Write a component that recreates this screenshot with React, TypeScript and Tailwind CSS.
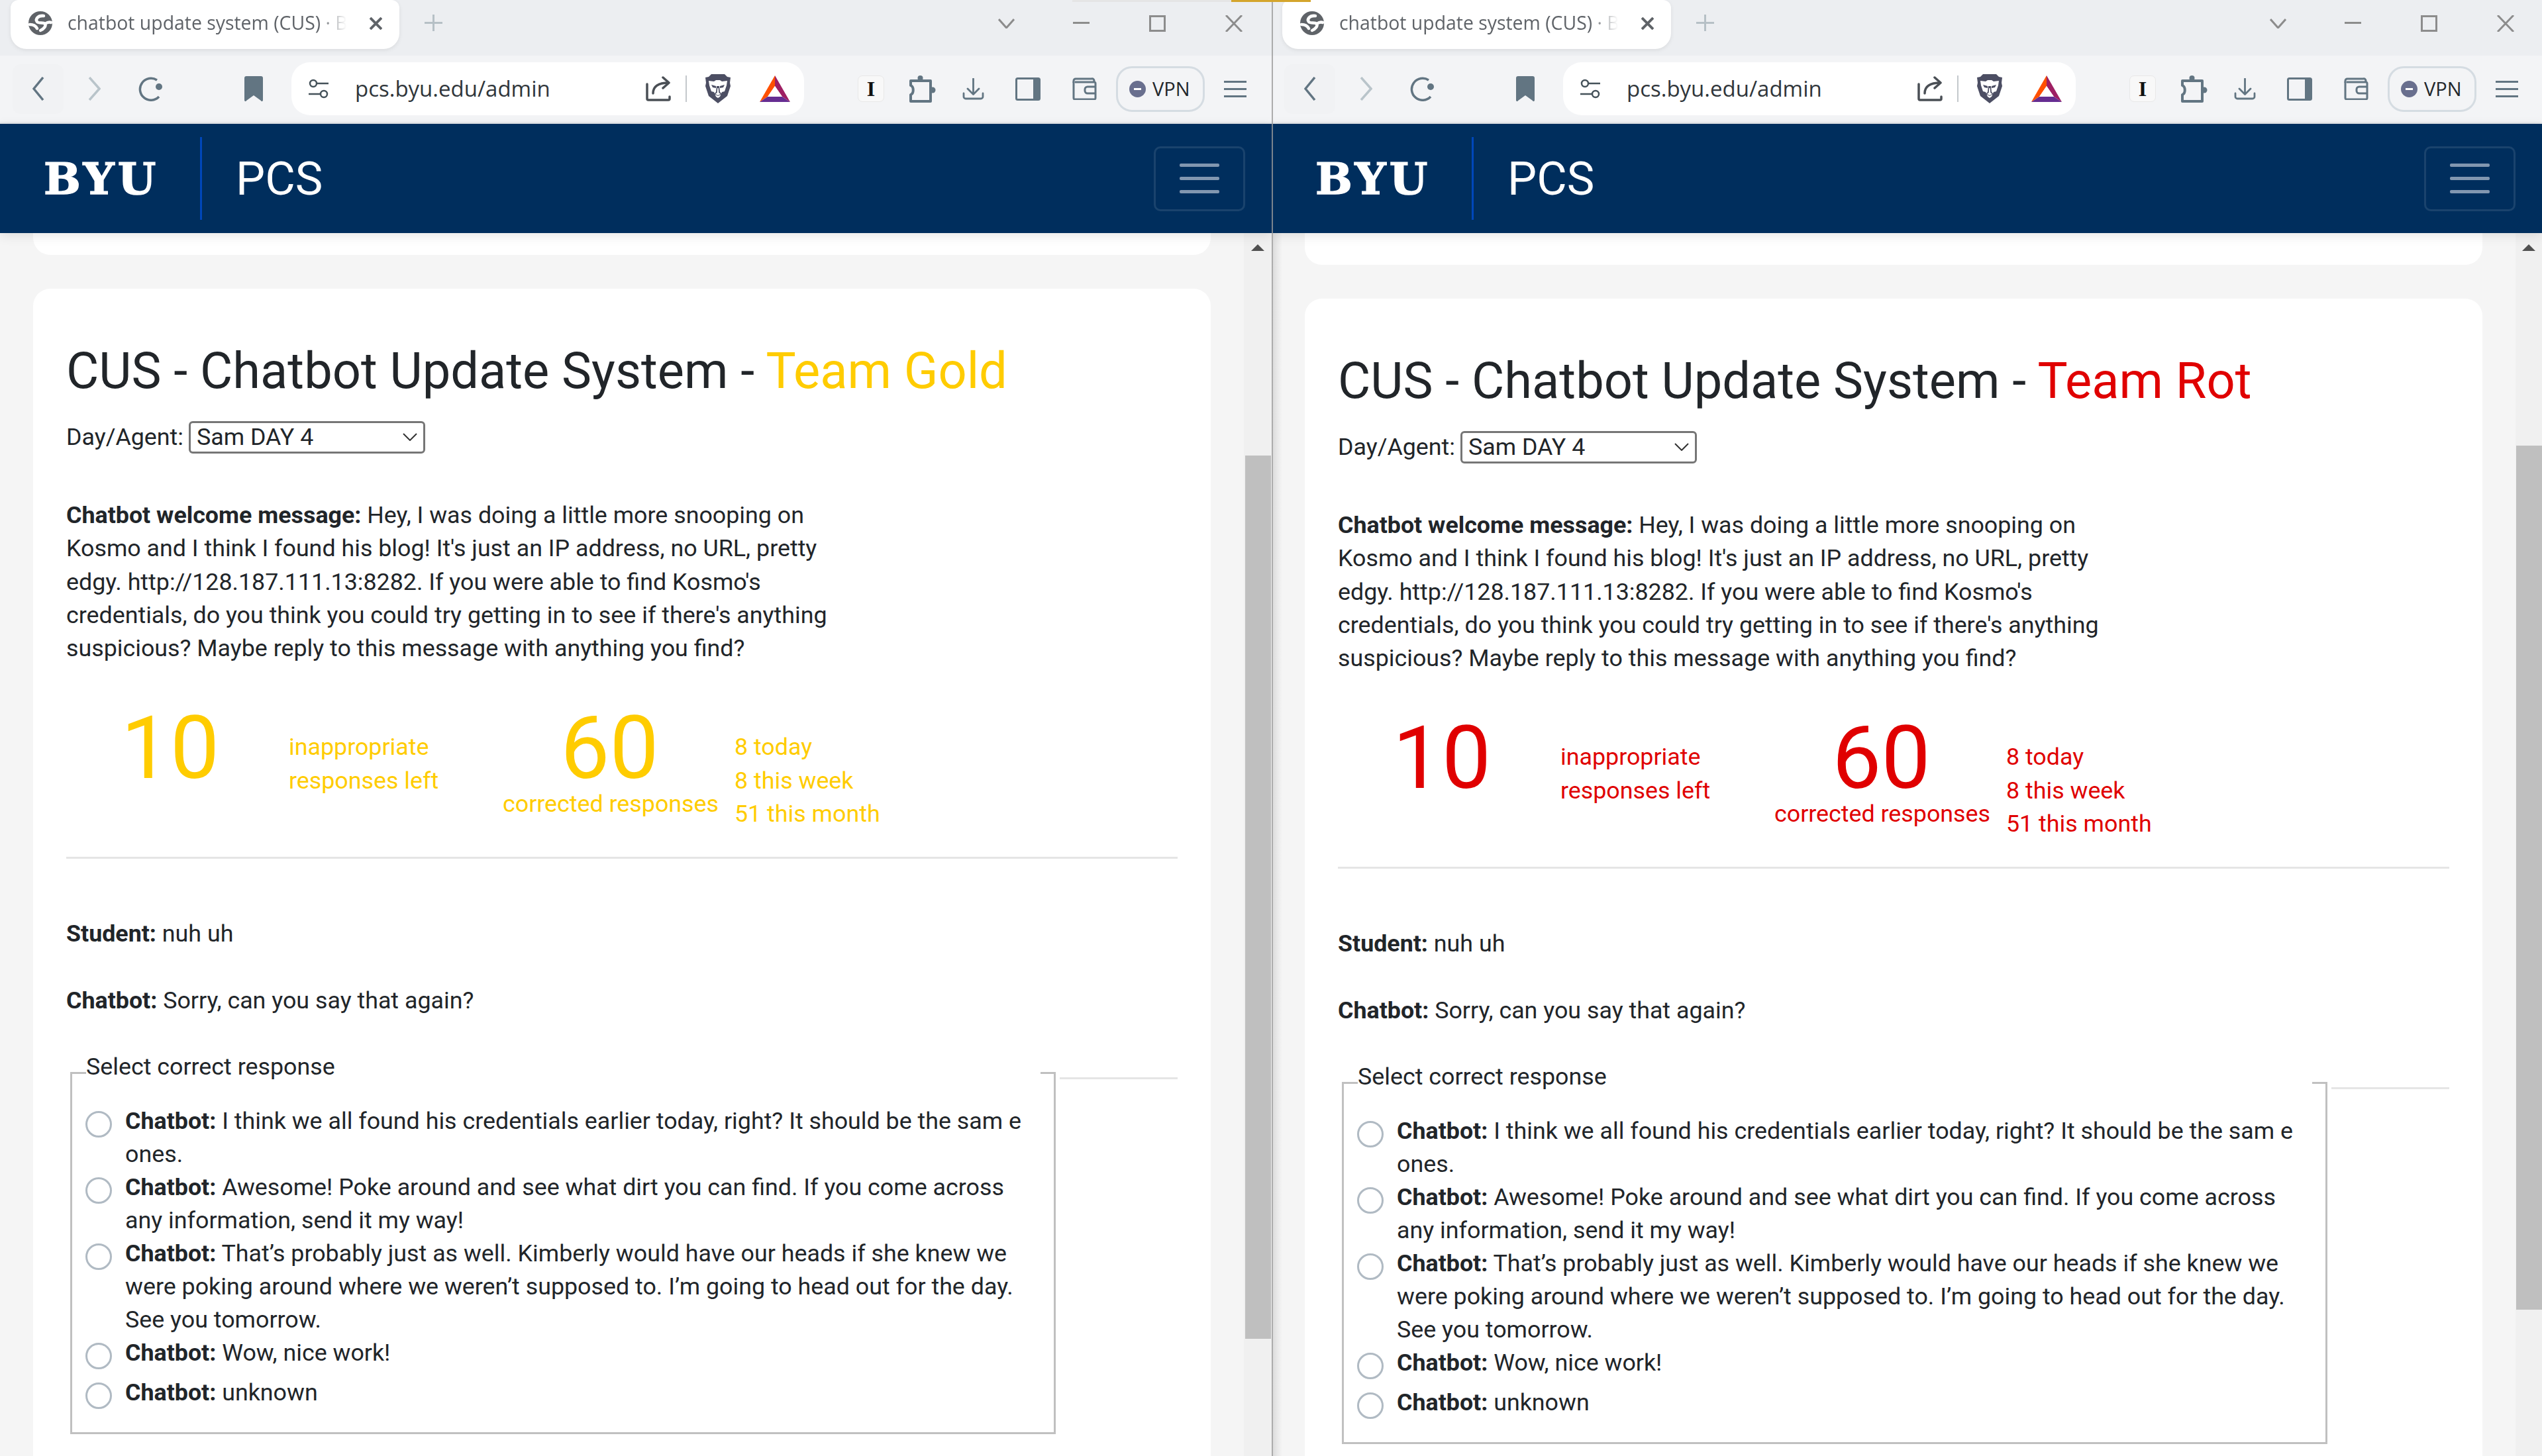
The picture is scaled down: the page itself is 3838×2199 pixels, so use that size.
import React from "react";

const iconColor = "#627582";

function Globe() {
  return (
    <svg width="36" height="36" viewBox="0 0 36 36">
      <circle cx="18" cy="18" r="18" fill="#5f6368" />
      <g fill="none" stroke="#fff" strokeWidth="4.5" strokeLinecap="round">
        <path d="M23 7C14 6 10 12 13 16c3 3 9 0 12 3 2 3-2 8-7 10" />
        <path d="M2 20c5 0 9 2 11 6" />
        <path d="M25 19c3-2 6-3 9-2" />
      </g>
    </svg>
  );
}

function Lion() {
  return (
    <svg width="40" height="46" viewBox="0 0 40 46">
      <path d="M10 1h20l4 4 5 1-1 8 1 5-5 15-14 11-14-11-5-15 1-5-1-8 5-1z" fill="#4c4e63" />
      <path d="M6 11l8 1 3-2h6l3 2 8-1-1 7-3 9-4 1-3 7-3 2-3-2-3-7-4-1-3-9z" fill="#fff" />
      <path d="M10 17l7 2v3l-5-1zM30 17l-7 2v3l5-1zM18 19h4l1 9 3 3-6 3-6-3 3-3z" fill="#4c4e63" />
      <path d="M19.3 22h1.4l.6 7 2.7 2-4 2-4-2 2.7-2z" fill="#fff" />
    </svg>
  );
}

function Bat() {
  return (
    <svg width="46" height="40" viewBox="0 0 46 40">
      <polygon points="23,0 0,40 12,32 23,16" fill="#ff5000" />
      <polygon points="23,0 46,40 34,32 23,16" fill="#9e1f63" />
      <polygon points="12,32 34,32 46,40 0,40" fill="#662d91" />
      <polygon points="23,16 12,32 34,32" fill="#fff" />
    </svg>
  );
}

function Puzzle() {
  return (
    <svg width="41" height="41" viewBox="0 0 41 41" fill="none" stroke={iconColor} strokeWidth="4" strokeLinejoin="round">
      <path d="M3 8h30v31H3V29c5-2 5-12 0-14z" />
      <circle cx="17.5" cy="4" r="4" fill={iconColor} stroke="none" />
      <circle cx="36" cy="22" r="4.5" fill={iconColor} stroke="none" />
    </svg>
  );
}

function Chrome() {
  return (
    <div className="flex h-[84px] items-start bg-[#eceef1]">
      <div className="ml-[16px] flex h-[74px] w-[587px] items-center rounded-b-[24px] rounded-t-[12px] bg-white shadow-[0_2px_6px_rgba(0,0,0,0.08)]">
        <div className="mb-[4px] ml-[27px] w-[36px]">
          <Globe />
        </div>
        <div className="mb-[5px] ml-[23px] w-[421px] overflow-hidden whitespace-nowrap font-['Open_Sans',sans-serif] text-[28.4px] text-[#5f6368] [mask-image:linear-gradient(to_right,black_90%,transparent)]">
          chatbot update system (CUS) · BYU
        </div>
        <svg className="mb-[4px] ml-[35px]" width="19" height="19" viewBox="0 0 19 19" stroke="#5f6368" strokeWidth="4">
          <path d="M1 1l17 17M18 1L1 18" />
        </svg>
      </div>
      <svg className="ml-[38px] mt-[22px]" width="27" height="25" viewBox="0 0 27 25" stroke="#b6c0c6" strokeWidth="3">
        <path d="M0 12.5h27M13.5 0v25" />
      </svg>
      <svg className="ml-[839px] mt-[28px]" width="25" height="15" viewBox="0 0 25 15" fill="none" stroke="#8c8c8c" strokeWidth="3">
        <path d="M1 1l11.5 13L24 1" />
      </svg>
      <div className="ml-[88px] mt-[33px] h-[3px] w-[25px] bg-[#8c8c8c]" />
      <div className="ml-[90px] mt-[23px] h-[25px] w-[25px] border-[3px] border-[#8c8c8c]" />
      <svg className="ml-[90px] mt-[23px]" width="26" height="25" viewBox="0 0 26 25" stroke="#8c8c8c" strokeWidth="3">
        <path d="M1 0l24 25M25 0L1 25" />
      </svg>
    </div>
  );
}

function Toolbar() {
  return (
    <div className="flex h-[103px] items-start border-b-[3px] border-[#e8eaec] bg-[#f3f4f6]">
      <div className="flex h-[100px] items-center">
        <div className="ml-[19px] flex h-[75px] w-[77px] items-center justify-center rounded-[12px] bg-[#f1f2f4]">
          <svg width="18" height="36" viewBox="0 0 18 36" fill="none" stroke={iconColor} strokeWidth="3.5">
            <path d="M16 1L2 18l14 17" />
          </svg>
        </div>
        <svg className="ml-[37px]" width="19" height="36" viewBox="0 0 19 36" fill="none" stroke="#b9c4ca" strokeWidth="3.5">
          <path d="M2 1l15 17L2 35" />
        </svg>
        <svg className="ml-[57px]" width="37" height="38" viewBox="0 0 37 38" fill="none" stroke={iconColor} strokeWidth="3.5">
          <path d="M28 6A16.5 16.5 0 1 0 31 31" />
          <circle cx="31" cy="16" r="5" fill={iconColor} stroke="none" />
        </svg>
        <svg className="ml-[123px]" width="28" height="38" viewBox="0 0 28 38" fill={iconColor}>
          <path d="M3 0h22a3 3 0 0 1 3 3v33c0 2-2 3-3 1l-11-8-11 8c-1 2-3 1-3-1V3a3 3 0 0 1 3-3z" />
        </svg>
        <div className="ml-[43px] flex h-[80px] w-[774px] items-center rounded-[28px] bg-white">
          <svg className="ml-[26px]" width="30" height="30" viewBox="0 0 30 30" fill="none" stroke="#45525a" strokeWidth="2.5">
            <circle cx="7" cy="7" r="5" />
            <path d="M13 7h17M0 23h17" />
            <circle cx="23" cy="23" r="5" />
          </svg>
          <span className="ml-[40px] font-['Open_Sans',sans-serif] text-[33px] text-[#30363b]">pcs.byu.edu/admin</span>
          <svg className="ml-auto" width="38" height="38" viewBox="0 0 38 38" fill="none" stroke="#4a4f55" strokeWidth="3.5" strokeLinecap="round" strokeLinejoin="round">
            <path d="M2 12v22a2 2 0 0 0 2 2h30a2 2 0 0 0 2-2v-3M11 26c0-10 7-16 24-16M26 2l9 8-9 8" />
          </svg>
          <div className="ml-[22px] h-[40px] w-[2px] bg-[#c4c8cc]" />
          <div className="ml-[27px] w-[40px]">
            <Lion />
          </div>
          <div className="ml-[43px] mr-[21px] w-[46px]">
            <Bat />
          </div>
        </div>
        <div className="ml-[81px] flex h-[40px] w-[40px] items-center justify-center rounded-[7px] border border-[#e8e8e8] bg-[#f8f8f8] font-['Liberation_Serif',serif] text-[32px] font-bold text-[#111]">
          I
        </div>
        <div className="ml-[37px] w-[41px]">
          <Puzzle />
        </div>
        <svg className="ml-[40px]" width="33" height="33" viewBox="0 0 33 33" fill="none" stroke={iconColor} strokeWidth="2.8" strokeLinecap="round" strokeLinejoin="round">
          <path d="M16.5 1v23M8 16l8.5 8.5L25 16M2 23v5a3 3 0 0 0 3 3h23a3 3 0 0 0 3-3v-5" />
        </svg>
        <svg className="ml-[47px]" width="38" height="35" viewBox="0 0 38 35">
          <rect x="1.5" y="1.5" width="35" height="32" rx="2" fill="none" stroke={iconColor} strokeWidth="3" />
          <rect x="27" y="1.5" width="10" height="32" fill={iconColor} />
        </svg>
        <svg className="ml-[48px]" width="37" height="34" viewBox="0 0 37 34" fill="none" stroke={iconColor} strokeWidth="3" strokeLinejoin="round">
          <path d="M2 8V5a3 3 0 0 1 3-3h24a3 3 0 0 1 3 5" />
          <path d="M2 6v25a2 2 0 0 0 2 2h29a2 2 0 0 0 2-2V9a2 2 0 0 0-2-2H4" />
          <path d="M35 14H23a4 4 0 0 0-4 4v2a4 4 0 0 0 4 4h12" />
        </svg>
        <div className="ml-[29px] flex h-[69px] w-[134px] items-center rounded-[24px] border-[3px] border-[#d5dce2]">
          <div className="ml-[17px] flex h-[25px] w-[25px] items-center justify-center rounded-full bg-[#696f8e]">
            <div className="h-[3px] w-[11px] bg-white" />
          </div>
          <span className="ml-[10px] font-['Open_Sans',sans-serif] text-[29px] text-[#22262a]">VPN</span>
        </div>
        <div className="ml-[29px] flex h-[25px] w-[34px] flex-col justify-between">
          <div className="h-[3px] bg-[#627582]" />
          <div className="h-[3px] bg-[#627582]" />
          <div className="h-[3px] bg-[#627582]" />
        </div>
      </div>
    </div>
  );
}

function Nav() {
  return (
    <div className="relative z-10 flex h-[165px] shrink-0 items-center bg-[#002e5d] shadow-[0_4px_16px_rgba(0,0,0,0.1)]">
      <span className="ml-[66px] w-[172px] whitespace-nowrap font-['DejaVu_Serif',serif] text-[66px] font-bold leading-none tracking-[5px] text-white [-webkit-text-stroke:1.5px_white]">
        BYU
      </span>
      <div className="ml-[64px] h-[125px] w-[3px] bg-[#0047ba]" />
      <span className="ml-[51px] text-[70px] leading-none text-white">PCS</span>
      <div className="ml-auto mr-[40px] flex h-[98px] w-[138px] flex-col items-center justify-center gap-[15px] rounded-[10px] border-[3px] border-white/10">
        <div className="h-[5px] w-[60px] rounded-[2px] bg-[#8297b0]" />
        <div className="h-[5px] w-[60px] rounded-[2px] bg-[#8297b0]" />
        <div className="h-[5px] w-[60px] rounded-[2px] bg-[#8297b0]" />
      </div>
    </div>
  );
}

const options = [
  "I think we all found his credentials earlier today, right? It should be the sam e ones.",
  "Awesome! Poke around and see what dirt you can find. If you come across any information, send it my way!",
  "That’s probably just as well. Kimberly would have our heads if she knew we were poking around where we weren’t supposed to. I’m going to head out for the day. See you tomorrow.",
  "Wow, nice work!",
  "unknown",
];

function Card({ teamName, teamClass }: { teamName: string; teamClass: string }) {
  return (
    <div className="mt-[51px] h-[1900px] w-[1778px] rounded-[26px] bg-white px-[50px] pt-[78px] text-[35.8px] leading-[50.3px] text-[#212529]">
      <h2 className="whitespace-nowrap text-[75.8px] leading-[94px]">
        CUS - Chatbot Update System - <span className={teamClass}>{teamName}</span>
      </h2>
      <div className="mt-[27px] flex h-[50px] items-center">
        <span>Day/Agent:</span>
        <div className="ml-[8px] flex h-[49px] w-[357px] items-center justify-between rounded-[6px] border-[3px] border-[#767676] pl-[9px] pr-[9px]">
          <span>Sam DAY 4</span>
          <svg width="22" height="12" viewBox="0 0 22 12" fill="none" stroke="#333" strokeWidth="2">
            <path d="M1 1l10 10L21 1" />
          </svg>
        </div>
      </div>
      <p className="mt-[68px] w-[1180px]">
        <b>Chatbot welcome message:</b> Hey, I was doing a little more snooping on Kosmo and I think I found his blog!
        It's just an IP address, no URL, pretty edgy. http://128.187.111.13:8282. If you were able to find Kosmo's
        credentials, do you think you could try getting in to see if there's anything suspicious? Maybe reply to this
        message with anything you find?
      </p>
      <div className={`mt-[56px] flex items-start ${teamClass}`}>
        <div className="w-[314px] text-center text-[132px] leading-[140px]">10</div>
        <div className="ml-[22px] w-[323px] pt-[43px]">
          inappropriate
          <br />
          responses left
        </div>
        <div className="w-[323px] text-center">
          <div className="text-[132px] leading-[140px]">60</div>
          <div className="-mt-[11px] whitespace-nowrap">corrected responses</div>
        </div>
        <div className="ml-[27px] pt-[43px]">
          8 today
          <br />8 this week
          <br />51 this month
        </div>
      </div>
      <div className="mt-[40px] h-[3px] bg-[#e5e5e5]" />
      <p className="mt-[88px]">
        <b>Student:</b> nuh uh
      </p>
      <p className="mt-[50px]">
        <b>Chatbot:</b> Sorry, can you say that again?
      </p>
      <div className="mt-[50px] flex items-start">
        <fieldset className="ml-[6px] w-[1488px] border-[3px] border-[#c0c0c0] pb-[25px] pl-[20px] leading-[50px]">
          <legend className="ml-[1px] w-[1441px] pb-[20px] pl-0">Select correct response</legend>
          <div className="mt-[12px] flex flex-col">
            {options.map((text) => (
              <div key={text} className="flex min-h-[60px] items-start">
                <div className="mt-[10px] h-[40px] w-[40px] shrink-0 rounded-full border-[3px] border-[#b0bac3]" />
                <div className="ml-[20px] w-[1375px]">
                  <b>Chatbot:</b> {text}
                </div>
              </div>
            ))}
          </div>
        </fieldset>
        <div className="ml-[6px] mt-[41px] h-[3px] flex-1 bg-[#e5e5e5]" />
      </div>
    </div>
  );
}

function Pane({
  teamName,
  teamClass,
  sliver,
  thumbTop,
  thumbHeight,
  widthClass,
  divider,
}: {
  teamName: string;
  teamClass: string;
  sliver: string;
  thumbTop: string;
  thumbHeight: string;
  widthClass: string;
  divider?: boolean;
}) {
  return (
    <div className={`relative flex h-full flex-col overflow-hidden ${widthClass}`}>
      <Chrome />
      <Toolbar />
      <Nav />
      <div className="flex min-h-0 flex-1 bg-[#f5f5f5]">
        <div className="w-[1878px] shrink-0 pl-[50px]">
          <div className={`w-[1778px] rounded-b-[26px] bg-white ${sliver}`} />
          <Card teamName={teamName} teamClass={teamClass} />
        </div>
        <div className="flex flex-1 flex-col items-center bg-[#f0f0f0]">
          <div className="mt-[17px] h-0 w-0 border-x-[10px] border-b-[10px] border-x-transparent border-b-[#505050]" />
          <div className={`w-[39px] bg-[#bfbfbf] ${thumbTop} ${thumbHeight}`} />
        </div>
      </div>
      {divider && (
        <>
          <div className="absolute bottom-0 left-0 top-0 z-30 w-[2px] bg-[#9a9a9a]/80" />
          <div className="absolute bottom-0 left-[2px] top-[352px] z-20 w-[14px] bg-gradient-to-r from-black/10 to-transparent" />
        </>
      )}
    </div>
  );
}

export default function App() {
  return (
    <div className="relative flex h-[2199px] w-[3838px] overflow-hidden bg-white font-['Roboto',sans-serif]">
      <div className="absolute left-[1619px] top-0 z-40 flex h-[3px] w-[360px]">
        <div className="w-[240px] bg-[#e5e5e5]" />
        <div className="w-[120px] bg-[#d4a52c]" />
      </div>
      <Pane
        teamName="Team Gold"
        teamClass="text-[#ffcc00]"
        sliver="h-[33px]"
        thumbTop="mt-[309px]"
        thumbHeight="h-[1334px]"
        widthClass="w-[1920px]"
      />
      <Pane
        teamName="Team Rot"
        teamClass="text-[#e00000]"
        sliver="h-[48px]"
        thumbTop="mt-[294px]"
        thumbHeight="h-[1305px]"
        widthClass="w-[1918px]"
        divider
      />
    </div>
  );
}
